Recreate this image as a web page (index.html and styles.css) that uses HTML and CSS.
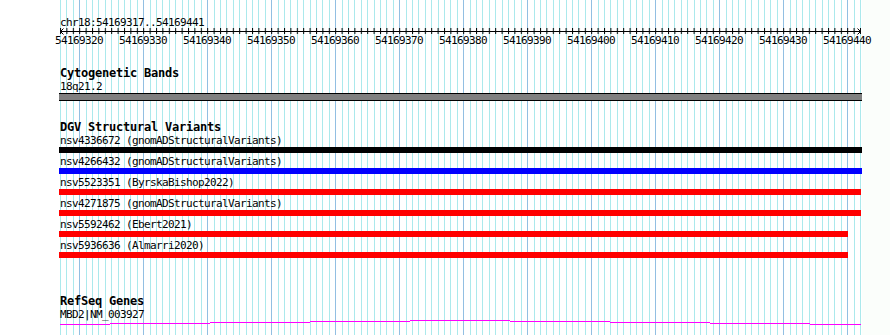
FILE: index.html
```html
<!DOCTYPE html>
<html lang="en">
<head>
    <meta charset="UTF-8">
    <title>chr18:54169317..54169441</title>
    <link rel="stylesheet" href="styles.css">
</head>
<body>
    <div class="view">
        <div class="ruler">
            <div class="ruler-title">chr18:54169317..54169441</div>
            <svg class="ruler-axis" width="802" height="9">
                <defs>
                    <pattern id="tick" width="6.4" height="9" patternUnits="userSpaceOnUse">
                        <rect x="0" y="1" width="1" height="6"/>
                    </pattern>
                </defs>
                <rect x="0" y="0" width="801" height="9" fill="url(#tick)"/>
                <path d="M0 4.5H801" stroke="#000" fill="none"/>
                <path d="M3.5 1.5L0.5 4.5L3.5 7.5M797.5 1.5L800.5 4.5L797.5 7.5" stroke="#000" fill="none"/>
            </svg>
            <div class="ruler-labels">
                <span>54169320</span>
                <span>54169330</span>
                <span>54169340</span>
                <span>54169350</span>
                <span>54169360</span>
                <span>54169370</span>
                <span>54169380</span>
                <span>54169390</span>
                <span>54169400</span>
                <span>54169410</span>
                <span>54169420</span>
                <span>54169430</span>
                <span>54169440</span>
            </div>
        </div>

        <section class="track track-cyto">
            <h2 class="track-title">Cytogenetic Bands</h2>
            <div class="feature-label">18q21.2</div>
            <div class="band"></div>
        </section>

        <section class="track track-dgv">
            <h2 class="track-title">DGV Structural Variants</h2>
            <div class="sv">
                <div class="feature-label">nsv4336672 (gnomADStructuralVariants)</div>
                <div class="sv-bar sv-black" style="width: 803px;"></div>
            </div>
            <div class="sv">
                <div class="feature-label">nsv4266432 (gnomADStructuralVariants)</div>
                <div class="sv-bar sv-blue" style="width: 803px;"></div>
            </div>
            <div class="sv">
                <div class="feature-label">nsv5523351 (ByrskaBishop2022)</div>
                <div class="sv-bar sv-red" style="width: 802px;"></div>
            </div>
            <div class="sv">
                <div class="feature-label">nsv4271875 (gnomADStructuralVariants)</div>
                <div class="sv-bar sv-red" style="width: 802px;"></div>
            </div>
            <div class="sv">
                <div class="feature-label">nsv5592462 (Ebert2021)</div>
                <div class="sv-bar sv-red" style="width: 789px;"></div>
            </div>
            <div class="sv">
                <div class="feature-label">nsv5936636 (Almarri2020)</div>
                <div class="sv-bar sv-red" style="width: 789px;"></div>
            </div>
        </section>

        <section class="track track-refseq">
            <h2 class="track-title">RefSeq Genes</h2>
            <div class="feature-label">MBD2|NM_003927</div>
            <svg class="gene" width="802" height="5">
                <path d="M0 4.5H50M50 3.5H150M150 2.5H250M250 1.5H350M350 0.5H450M450 1.5H550M550 2.5H650M650 3.5H750M750 4.5H801" stroke="#ff00ff" fill="none"/>
            </svg>
        </section>
    </div>
</body>
</html>
```

FILE: styles.css
```css
* {
    margin: 0;
    padding: 0;
    box-sizing: border-box;
}

body {
    background: #fbfefb;
    font-family: 'DejaVu Sans Mono', monospace;
    color: #000;
    overflow: hidden;
}

.view {
    width: 862px;
    height: 335px;
    padding-left: 60px;
    background:
        repeating-linear-gradient(to right, transparent 0 19.2px, #92bfe2 19.2px 20.2px, transparent 20.2px 64px) content-box,
        repeating-linear-gradient(to right, #abe9ec 0 1px, transparent 1px 6.4px) content-box,
        linear-gradient(#fff, #fff) border-box;
}

.ruler {
    padding-top: 16px;
}

/* small labels: 6px cells like the gd small font */
.ruler-title,
.feature-label,
.ruler-labels {
    font-size: 11px;
    line-height: 13px;
    letter-spacing: -0.62px;
    white-space: nowrap;
}

.ruler-axis {
    display: block;
    margin-top: -2px;
}

.ruler-labels {
    display: flex;
    margin-top: -2px;
    margin-left: -13px;
}

.ruler-labels span {
    flex: none;
    width: 64px;
    text-align: center;
}

.track-title {
    font-size: 12px;
    line-height: 13px;
    letter-spacing: -0.22px;
    font-weight: bold;
    white-space: nowrap;
}

.track-cyto {
    margin-top: 20px;
}

.band {
    height: 8px;
    width: 803px;
    margin-left: -1px;
    background: #808080;
    border-top: 1px solid #000;
    border-bottom: 1px solid #000;
}

.track-dgv {
    margin-top: 20px;
}

.sv {
    padding-bottom: 2px;
}

.sv-bar {
    height: 6px;
    margin-left: -1px;
}

.sv-black {
    background: #000;
}

.sv-blue {
    background: #0000ff;
}

.sv-red {
    background: #ff0000;
}

.track-refseq {
    margin-top: 35px;
}

.gene {
    display: block;
    margin-top: -1px;
}
```
